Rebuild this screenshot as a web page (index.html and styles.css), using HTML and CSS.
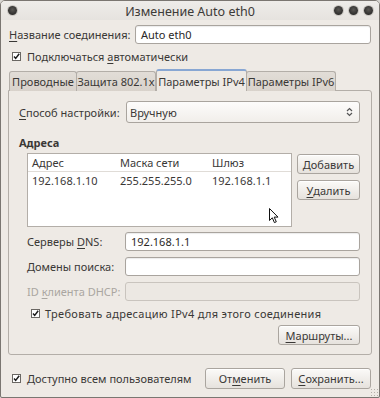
FILE: index.html
```html
<!DOCTYPE html>
<html lang="ru">
<head>
<meta charset="utf-8">
<title>Изменение Auto eth0</title>
<link rel="stylesheet" href="styles.css">
</head>
<body>
<div class="window">
  <div class="titlebar">
    <div class="tb-left"><span class="wdot"></span></div>
    <div class="title">Изменение Auto eth0</div>
    <div class="tb-right"><span class="wdot"></span><span class="wdot"></span><span class="wdot"></span></div>
  </div>
  <div class="content">
    <div class="name-row">
      <span class="lbl"><u>Н</u>азвание соединения:</span>
      <div class="entry">Auto eth0</div>
    </div>
    <div class="check-row top-check">
      <svg class="cb" width="9" height="9" viewBox="0 0 9 9"><rect x="0.5" y="0.5" width="8" height="8" fill="#fff" stroke="#6a6763"/><path d="M2 4.4 L3.7 6.4 L7.2 1.8" fill="none" stroke="#1e1e1e" stroke-width="1.5"/></svg>
      <span>Подключаться <u>а</u>втоматически</span>
    </div>
    <div class="notebook">
      <div class="tabs">
        <div class="tab t1">Проводные</div>
        <div class="tab t2">Защита 802.1x</div>
        <div class="tab active t3">Параметры IPv4</div>
        <div class="tab t4">Параметры IPv6</div>
      </div>
      <div class="panel">
        <div class="combo-row">
          <span class="lbl"><u>С</u>пособ настройки:</span>
          <div class="combo">
            <span>Вручную</span>
            <svg width="7" height="10" viewBox="0 0 7 10"><path d="M1 4 L3.5 1.5 L6 4 M1 6 L3.5 8.5 L6 6" fill="none" stroke="#555" stroke-width="1.2"/></svg>
          </div>
        </div>
        <div class="heading">Адреса</div>
        <div class="addr">
          <div class="tree">
            <div class="trow thead"><span>Адрес</span><span>Маска сети</span><span>Шлюз</span></div>
            <div class="trow"><span>192.168.1.10</span><span>255.255.255.0</span><span>192.168.1.1</span></div>
            <svg class="cursor" width="10" height="16" viewBox="0 0 10 16"><path d="M0.5 0.5 L0.5 12.5 L3.3 9.8 L5.4 14.6 L7.3 13.8 L5.2 9.1 L9 9.1 Z" fill="#fff" stroke="#111" stroke-width="1" stroke-linejoin="round"/></svg>
          </div>
          <div class="side-btns">
            <div class="btn">Добавить</div>
            <div class="btn"><u>У</u>далить</div>
          </div>
        </div>
        <div class="fields">
          <span class="lbl">Серверы <u>D</u>NS:</span>
          <div class="entry">192.168.1.1</div>
          <span class="lbl">Домены поиска:</span>
          <div class="entry"></div>
          <span class="lbl disabled">ID <u>к</u>лиента DHCP:</span>
          <div class="entry off"></div>
        </div>
        <div class="check-row inner-check">
          <svg class="cb" width="9" height="9" viewBox="0 0 9 9"><rect x="0.5" y="0.5" width="8" height="8" fill="#fff" stroke="#6a6763"/><path d="M2 4.4 L3.7 6.4 L7.2 1.8" fill="none" stroke="#1e1e1e" stroke-width="1.5"/></svg>
          <span class="long">Требовать адресацию IPv4 для этого соединения</span>
        </div>
        <div class="routes-row">
          <div class="btn routes"><u>М</u>аршруты...</div>
        </div>
      </div>
    </div>
    <div class="footer">
      <div class="check-row">
        <svg class="cb" width="9" height="9" viewBox="0 0 9 9"><rect x="0.5" y="0.5" width="8" height="8" fill="#fff" stroke="#6a6763"/><path d="M2 4.4 L3.7 6.4 L7.2 1.8" fill="none" stroke="#1e1e1e" stroke-width="1.5"/></svg>
        <span>Доступно всем пользователям</span>
      </div>
      <div class="footer-btns">
        <div class="btn wide">От<u>м</u>енить</div>
        <div class="btn wide"><u>С</u>охранить...</div>
      </div>
    </div>
  </div>
  <div class="grip"></div>
</div>
</body>
</html>
```

FILE: styles.css
```css
* { box-sizing: border-box; }
html, body { margin: 0; padding: 0; }
body {
  width: 380px;
  height: 398px;
  overflow: hidden;
  background: #d8d6d2;
}
.window {
  position: relative;
  width: 380px;
  height: 398px;
  border: 1px solid #7a7671;
  border-radius: 5px 5px 2px 2px;
  background: #eeeae5;
  font-family: "Noto Sans", "Open Sans", "DejaVu Sans", sans-serif;
  font-size: 11px;
  color: #3a3836;
  overflow: hidden;
  white-space: nowrap;
}
u { text-decoration: underline; text-underline-offset: 2px; text-decoration-thickness: 1px; }

.titlebar {
  height: 19px;
  display: grid;
  grid-template-columns: 1fr auto 1fr;
  align-items: center;
  background: linear-gradient(#eeece9, #e6e3df);
}
.title { font-size: 12.5px; color: #3c3a38; padding-top: 1px; }
.tb-left { padding-left: 7px; display: flex; }
.tb-right { display: flex; justify-content: flex-end; gap: 6px; padding-right: 6px; }
.wdot {
  width: 9px; height: 9px; border-radius: 50%;
  background: radial-gradient(circle at 50% 40%, #5a5855 0, #2e2d2c 70%);
  box-shadow: 0 0 0 1px #c9c6c1;
}

.content { padding: 0 7px; }

.name-row {
  margin-top: 5px;
  display: grid;
  grid-template-columns: 126px 1fr;
  align-items: center;
  padding-left: 1px;
  margin-right: 1px;
}
.entry {
  height: 19px;
  background: #fff;
  border: 1px solid #a9a49e;
  border-radius: 3px;
  box-shadow: inset 0 1px 1px rgba(0,0,0,0.08);
  padding: 0 5px;
  display: flex;
  align-items: center;
  color: #2a2826;
}
.entry.off { background: #ece8e3; border-color: #c9c4be; box-shadow: none; }

.check-row { display: flex; align-items: center; gap: 6px; height: 16px; }
.cb { flex: none; }
.top-check { margin-top: 4px; padding-left: 4px; }

.notebook { margin-top: 5px; }
.tabs { display: flex; align-items: flex-end; height: 21px; padding-left: 1px; position: relative; z-index: 1; }
.tab {
  height: 20px;
  margin-bottom: -1px;
  border: 1px solid #b3aea8;
  border-bottom: none;
  border-radius: 3px 3px 0 0;
  background: linear-gradient(#e2ddd7, #d8d2cb);
  display: flex; align-items: center; justify-content: center;
  color: #3a3836;
}
.tab + .tab { margin-left: -1px; }
.tab.active {
  height: 22px;
  margin-bottom: -1px;
  background: #eeeae5;
  border-top: 2px solid #88a7d3;
  margin-left: 0;
  margin-right: 0;
}
.t1 { width: 68px; }
.t2 { width: 80px; }
.t3 { width: 91px; }
.t4 { width: 90px; }

.panel {
  height: 265px;
  border: 1px solid #b3aea8;
  border-radius: 0 3px 3px 3px;
  padding: 10px 11px 0 10px;
}
.combo-row { display: grid; grid-template-columns: 107px 1fr; align-items: center; }
.combo {
  height: 22px;
  border: 1px solid #a9a49e;
  border-radius: 3px;
  background: linear-gradient(#fdfcfb, #f1eeea);
  display: flex; align-items: center; justify-content: space-between;
  padding: 0 6px 0 3px;
}
.heading { font-weight: bold; margin-top: 12px; line-height: 16px; }

.addr { display: flex; margin-top: 2px; padding-left: 8px; gap: 5px; }
.tree {
  position: relative;
  width: 265px;
  height: 74px;
  background: #fff;
  border: 1px solid #b3aea8;
}
.trow { display: grid; grid-template-columns: 88px 92px 1fr; padding-left: 4px; height: 17px; align-items: center; }
.thead { height: 18px; border-bottom: 1px solid #e0dcd7; }
.cursor { position: absolute; left: 241px; top: 54px; }

.side-btns { display: flex; flex-direction: column; gap: 6px; padding-top: 1px; }
.btn {
  height: 20px;
  width: 63px;
  border: 1px solid #aaa59f;
  border-radius: 3px;
  background: linear-gradient(#fbfaf8, #e6e2dd);
  box-shadow: inset 0 1px 0 #fff;
  display: flex; align-items: center; justify-content: center;
  color: #3a3836;
}

.fields {
  margin-top: 5px;
  padding-left: 8px;
  display: grid;
  grid-template-columns: 98px 1fr;
  row-gap: 6px;
  align-items: center;
}
.lbl.disabled { color: #aaa6a1; }

.inner-check { margin-top: 4px; padding-left: 12px; gap: 5px; }
.long { letter-spacing: 0.3px; }
.routes-row { display: flex; justify-content: flex-end; margin-top: 4px; }
.routes { width: 82px; }

.footer { margin-top: 13px; display: flex; justify-content: space-between; align-items: center; padding-left: 4px; margin-right: 1px; }
.footer-btns { display: flex; gap: 6px; }
.btn.wide { width: 80px; height: 21px; }

.grip {
  position: absolute; right: 1px; bottom: 1px; width: 8px; height: 8px;
  background-image: radial-gradient(circle, #b5b0aa 0.8px, transparent 1px);
  background-size: 3px 3px;
}
```
